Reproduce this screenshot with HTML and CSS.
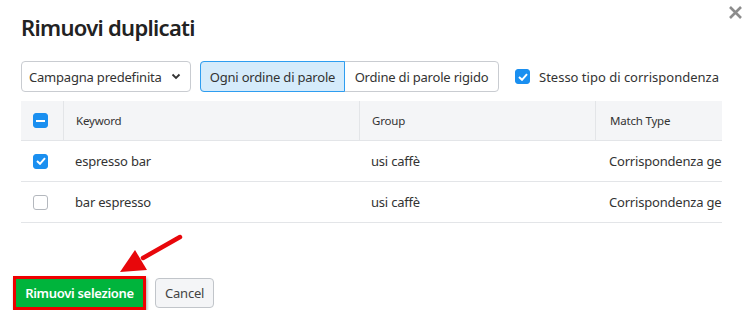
FILE: index.html
```html
<!DOCTYPE html>
<html lang="it">
<head>
    <meta charset="UTF-8">
    <title>Rimuovi duplicati</title>
    <link rel="stylesheet" href="styles.css">
</head>
<body>
    <div class="dialog">
        <div class="dialog-head">
            <h1>Rimuovi duplicati</h1>
            <svg class="close" width="15" height="15" viewBox="0 0 15 15"><path d="M2 2 L13 13 M13 2 L2 13" stroke="#8c8c8c" stroke-width="2.6"/></svg>
        </div>

        <div class="controls">
            <div class="select">Campagna predefinita
                <svg width="10" height="7" viewBox="0 0 10 7"><path d="M1.5 1.5 L5 5 L8.5 1.5" fill="none" stroke="#333" stroke-width="1.8"/></svg>
            </div>
            <div class="toggle">
                <span class="on">Ogni ordine di parole</span>
                <span>Ordine di parole rigido</span>
            </div>
            <label class="check-label">
                <span class="box checked"><svg width="10" height="8" viewBox="0 0 10 8"><path d="M1 4 L4 6.8 L9 1.2" fill="none" stroke="#fff" stroke-width="2"/></svg></span>
                Stesso tipo di corrispondenza
            </label>
        </div>

        <div class="table">
            <div class="row head">
                <div class="cell cb"><span class="box checked"><i class="minus"></i></span></div>
                <div class="cell kw">Keyword</div>
                <div class="cell grp">Group</div>
                <div class="cell mt">Match Type</div>
            </div>
            <div class="row">
                <div class="cell cb"><span class="box checked"><svg width="10" height="8" viewBox="0 0 10 8"><path d="M1 4 L4 6.8 L9 1.2" fill="none" stroke="#fff" stroke-width="2"/></svg></span></div>
                <div class="cell kw">espresso bar</div>
                <div class="cell grp">usi caffè</div>
                <div class="cell mt">Corrispondenza ge</div>
            </div>
            <div class="row">
                <div class="cell cb"><span class="box"></span></div>
                <div class="cell kw">bar espresso</div>
                <div class="cell grp">usi caffè</div>
                <div class="cell mt">Corrispondenza ge</div>
            </div>
        </div>

        <div class="footer">
            <div class="mark"><button class="primary">Rimuovi selezione</button></div>
            <button class="cancel">Cancel</button>
            <svg class="arrow" width="80" height="50" viewBox="0 0 80 50">
                <line x1="67" y1="5" x2="30" y2="26" stroke="#e8070b" stroke-width="4.5" stroke-linecap="round"/>
                <polygon points="7,40 22,18 34,38" fill="#e8070b"/>
            </svg>
        </div>
    </div>
</body>
</html>
```

FILE: styles.css
```css
body {
    margin: 0;
    background: #fff;
    font-family: "Noto Sans", "Open Sans", sans-serif;
    color: #333;
    font-size: 13px;
}
.dialog {
    padding: 11px 0 0 21px;
    width: 729px;
}
.dialog-head {
    display: flex;
    justify-content: space-between;
    align-items: flex-start;
    height: 50px;
}
h1 {
    margin: 0;
    font-size: 22px;
    font-weight: 600;
    line-height: 32px;
    color: #222;
    letter-spacing: -0.7px;
}
.close {
    margin: -6px 7px 0 0;
}
.controls {
    display: flex;
    align-items: center;
    height: 31px;
}
.select {
    width: 170px;
    height: 31px;
    box-sizing: border-box;
    border: 1px solid #c9ccd1;
    border-radius: 4px;
    display: flex;
    align-items: center;
    justify-content: space-between;
    padding: 0 9px 0 7px;
    letter-spacing: -0.2px;
}
.toggle {
    display: flex;
    margin-left: 9px;
    height: 31px;
    border: 1px solid #c9ccd1;
    border-radius: 4px;
    box-sizing: border-box;
}
.toggle span {
    display: flex;
    align-items: center;
    padding: 0 7px;
    letter-spacing: -0.2px;
}
.toggle .on {
    background: #d5ebfb;
    border: 1px solid #2e9df0;
    margin: -1px 0 -1px -1px;
    border-radius: 4px 0 0 4px;
    width: 145px;
    box-sizing: border-box;
    justify-content: center;
}
.toggle span:last-child {
    width: 153px;
    box-sizing: border-box;
    justify-content: center;
}
.check-label {
    display: flex;
    align-items: center;
    gap: 9px;
    margin-left: 16px;
}
.box {
    display: inline-flex;
    align-items: center;
    justify-content: center;
    width: 15px;
    height: 15px;
    box-sizing: border-box;
    border: 1px solid #b4b8be;
    border-radius: 3px;
    background: #fff;
}
.box.checked {
    background: #1a8ff0;
    border-color: #1a8ff0;
}
.minus {
    display: block;
    width: 9px;
    height: 2px;
    background: #fff;
}
.table {
    margin-top: 9px;
    width: 701px;
    overflow: hidden;
}
.row {
    display: grid;
    grid-template-columns: 42px 296px 236px 240px;
    height: 41px;
    border-bottom: 1px solid #e3e5e8;
    box-sizing: border-box;
}
.row.head {
    background: #f4f5f7;
    height: 40px;
    font-size: 11.5px;
}
.cell {
    display: flex;
    align-items: center;
    padding-left: 12px;
    white-space: nowrap;
    letter-spacing: -0.2px;
}
.cell.cb {
    padding-left: 12px;
}
.cell.mt {
    padding-left: 14px;
}
.head .cell + .cell {
    border-left: 1px solid #e3e5e8;
}
.footer {
    position: relative;
    display: flex;
    align-items: center;
    gap: 9px;
    margin: 53px 0 0 -8px;
}
.mark {
    border: 3px solid #ee0000;
    box-shadow: 1px 2px 3px rgba(0, 0, 0, 0.35);
}
button {
    font-family: inherit;
    font-size: 13px;
    cursor: pointer;
}
.primary {
    display: block;
    background: #00b43c;
    color: #fff;
    border: none;
    height: 28px;
    width: 127px;
    font-weight: 600;
    letter-spacing: -0.3px;
}
.cancel {
    background: #f4f5f7;
    border: 1px solid #c1c5ca;
    border-radius: 4px;
    height: 30px;
    padding: 0 9px;
    color: #444;
    letter-spacing: -0.2px;
}
.arrow {
    position: absolute;
    left: 100px;
    top: -44px;
}
```
